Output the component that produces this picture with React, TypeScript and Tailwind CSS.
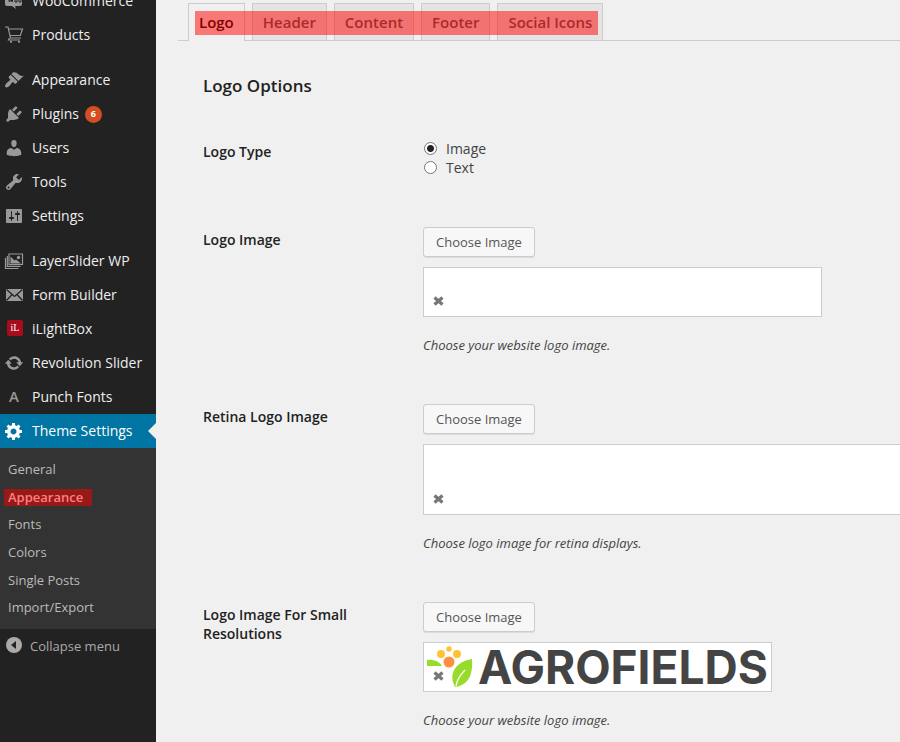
import React from "react";

type IconProps = { children: React.ReactNode };

function Icon({ children }: IconProps) {
  return (
    <svg viewBox="0 0 20 20" className="size-5 shrink-0" fill="currentColor" aria-hidden="true">
      {children}
    </svg>
  );
}

const icons = {
  woo: (
    <Icon>
      <path d="M3 3h13a2 2 0 0 1 2 2v8a2 2 0 0 1-2 2h-5l1 3-4-3H3a2 2 0 0 1-2-2V5a2 2 0 0 1 2-2z" />
      <path d="M4 7l1.500 4L7 8l1 3 1-4M11 7h2v4h-2zM15 7h2v4h-2z" fill="none" stroke="#222" />
    </Icon>
  ),
  cart: (
    <Icon>
      <path
        d="M1 2h3l2.500 11H17M4.800 4H18.500l-2.200 6.500H6M5.500 13l-1 2H16"
        fill="none"
        stroke="currentColor"
        strokeWidth="1.200"
      />
      <circle cx="7" cy="16.800" r="1.100" />
      <circle cx="15" cy="16.800" r="1.100" />
    </Icon>
  ),
  appearance: (
    <Icon>
      <path d="M14.48 11.060L7.410 3.990l1.500-1.500c.5-.56 2.300-.47 3.510.32 1.210.8 1.430 1.280 2.910 2.100 1.180.64 2.450 1.260 4.450.85zm-.71.71L6.700 4.700 4.930 6.470c-.39.39-.39 1.020 0 1.410l1.060 1.060c.39.39.39 1.030 0 1.420-.6.6-1.430 1.110-2.210 1.690-.35.26-.7.53-1.010.84C1.430 14.230.4 16.080 1.400 17.070c.99 1 2.840-.03 4.180-1.360.31-.31.58-.66.85-1.020.57-.78 1.080-1.610 1.690-2.210.39-.39 1.020-.39 1.410 0l1.060 1.060c.39.39 1.020.39 1.410 0z" />
    </Icon>
  ),
  plugins: (
    <Icon>
      <path d="M13.110 4.360L9.870 7.600 8 5.730l3.240-3.240c.35-.34 1.050-.2 1.560.32.52.51.66 1.210.31 1.550zm-8 1.770l.91-1.120 9.010 9.010-1.190.84c-.71.71-2.630 1.160-3.820 1.160H6.140L4.900 17.260c-.59.59-1.540.59-2.120 0-.59-.58-.59-1.530 0-2.120l1.240-1.240v-3.880c0-1.130.4-3.190 1.090-3.890zm7.260 3.970l3.240-3.240c.34-.35 1.040-.21 1.550.31.52.51.66 1.210.31 1.550l-3.240 3.250z" />
    </Icon>
  ),
  users: (
    <Icon>
      <path d="M10 9.250c-2.270 0-2.730-3.440-2.730-3.440C7 4.020 7.820 2 9.970 2c2.160 0 2.980 2.020 2.710 3.810 0 0-.41 3.440-2.680 3.440zm0 2.570L12.720 10c2.390 0 4.520 2.330 4.520 4.530v2.490s-3.650 1.130-7.240 1.130c-3.650 0-7.240-1.130-7.240-1.130v-2.490c0-2.250 1.940-4.480 4.470-4.480z" />
    </Icon>
  ),
  tools: (
    <Icon>
      <path d="M16.680 9.770c-1.340 1.340-3.300 1.670-4.950.99l-5.410 6.520c-.99.99-2.590.99-3.580 0s-.99-2.590 0-3.570l6.520-5.420c-.68-1.650-.35-3.610.99-4.950 1.280-1.280 3.120-1.620 4.720-1.060l-2.890 2.890 2.820 2.820 2.860-2.870c.53 1.580.18 3.390-1.080 4.650zM3.810 16.210c.4.390 1.040.39 1.430 0 .4-.4.4-1.040 0-1.430-.39-.4-1.030-.4-1.430 0-.39.390-.39 1.030 0 1.430z" />
    </Icon>
  ),
  settings: (
    <Icon>
      <path d="M18 16V4c0-.550-.45-1-1-1H3c-.550 0-1 .450-1 1v12c0 .550.450 1 1 1h14c.550 0 1-.450 1-1zM8 11h1c.550 0 1 .450 1 1s-.45 1-1 1H8v1.500c0 .280-.220.500-.5.500s-.5-.220-.5-.500V13H6c-.550 0-1-.450-1-1s.450-1 1-1h1V5.500c0-.280.220-.500.500-.500s.500.220.500.500V11zm5-2h-1c-.550 0-1-.450-1-1s.450-1 1-1h1V5.500c0-.280.220-.500.500-.500s.500.220.500.500V7h1c.550 0 1 .450 1 1s-.45 1-1 1h-1v5.500c0 .280-.220.500-.5.500s-.5-.220-.5-.500V9z" />
    </Icon>
  ),
  layers: (
    <Icon>
      <g fill="none" stroke="currentColor" strokeWidth="1.200">
        <path d="M5 3h13.500v10.500H5zM3.300 5v10.300H16.500M1.500 7v10.500H14.500" />
      </g>
      <path d="M6.500 12.500V5.500l4 4 1.500-1 5 4z" />
      <circle cx="14.500" cy="6.500" r="1.700" />
    </Icon>
  ),
  mail: (
    <Icon>
      <path d="M2 4h17v12H2z" />
      <path d="M2.500 4.500L10.500 11.500 18.500 4.500M2.500 15.500l5.600-6M18.500 15.500l-5.600-6" fill="none" stroke="#222" strokeWidth="1.300" />
    </Icon>
  ),
  update: (
    <Icon>
      <path d="M10.200 3.280c3.530 0 6.430 2.610 6.920 6h2.080l-3.500 4-3.500-4h2.320c-.45-1.970-2.210-3.450-4.320-3.450-1.450 0-2.730.71-3.540 1.780L4.950 5.660C6.230 4.200 8.110 3.280 10.200 3.280zm-.4 13.440c-3.520 0-6.430-2.610-6.920-6H.8l3.500-4c1.170 1.330 2.330 2.670 3.500 4H5.480c.45 1.970 2.210 3.450 4.320 3.450 1.450 0 2.730-.71 3.540-1.780l1.710 1.950c-1.280 1.460-3.150 2.380-5.250 2.380z" />
    </Icon>
  ),
  gear: (
    <Icon>
      <path d="M18 12h-2.180c-.17.700-.44 1.350-.81 1.930l1.540 1.540-2.100 2.100-1.540-1.540c-.58.360-1.230.630-1.910.790V19H8v-2.180c-.68-.16-1.330-.43-1.910-.79l-1.540 1.540-2.120-2.120 1.540-1.540c-.36-.58-.63-1.230-.79-1.910H1V9.030h2.170c.16-.7.440-1.350.8-1.940L2.430 5.550l2.100-2.100 1.540 1.540c.58-.37 1.240-.64 1.930-.81V2h3v2.180c.68.160 1.330.43 1.910.79l1.540-1.540 2.120 2.120-1.540 1.540c.36.590.64 1.240.8 1.940H18V12zm-8.500 1.500c1.660 0 3-1.340 3-3s-1.340-3-3-3-3 1.340-3 3 1.340 3 3 3z" />
    </Icon>
  ),
};

type MenuItem = { label: string; icon: React.ReactNode; gap?: boolean; badge?: number; current?: boolean };

const menu: MenuItem[] = [
  { label: "WooCommerce", icon: icons.woo },
  { label: "Products", icon: icons.cart },
  { label: "Appearance", icon: icons.appearance, gap: true },
  { label: "Plugins", icon: icons.plugins, badge: 6 },
  { label: "Users", icon: icons.users },
  { label: "Tools", icon: icons.tools },
  { label: "Settings", icon: icons.settings },
  { label: "LayerSlider WP", icon: icons.layers, gap: true },
  { label: "Form Builder", icon: icons.mail },
  {
    label: "iLightBox",
    icon: (
      <span className="mr-px ml-[3px] mb-0.5 flex size-4 items-center justify-center rounded-xs bg-[#a80c1c] font-['Liberation_Serif',serif] text-[10px] leading-4 text-white">
        iL
      </span>
    ),
  },
  { label: "Revolution Slider", icon: icons.update },
  {
    label: "Punch Fonts",
    icon: <span className="w-5 pb-0.5 text-center font-['Open_Sans',sans-serif] text-[15px] font-semibold">A</span>,
  },
  { label: "Theme Settings", icon: icons.gear, current: true },
];

const submenu = ["General", "Appearance", "Fonts", "Colors", "Single Posts", "Import/Export"];

function Sidebar() {
  return (
    <nav className="-mt-4 w-39 shrink-0 bg-[#222]" aria-label="Admin menu">
      <ul>
        {menu.map((item) => (
          <li key={item.label} className={item.gap ? "mt-[11px]" : ""}>
            <a
              href="#"
              className={
                "relative flex h-[34px] items-center gap-2 pl-1 text-[14px] whitespace-nowrap " +
                (item.current ? "bg-[#0074a2] text-white" : "text-[#999]")
              }
            >
              {item.icon}
              <span className={"pb-0.5 " + (item.current ? "text-white" : "text-[#eee]")}>{item.label}</span>
              {item.badge && (
                <span className="-ml-0.5 flex size-[17px] items-center justify-center rounded-full bg-[#d54e21] text-[9px] font-bold text-white">
                  {item.badge}
                </span>
              )}
              {item.current && (
                <span className="absolute right-0 top-[9px] border-y-8 border-r-8 border-y-transparent border-r-[#f0f0f0]" />
              )}
            </a>
          </li>
        ))}
      </ul>
      <ul className="flex h-[181px] flex-col bg-[#333] pt-2 pb-[7px] text-[13px] text-[#bbb]">
        {submenu.map((name) => (
          <li key={name} className="flex flex-1 items-center pl-1">
            {name === "Appearance" ? (
              <a href="#" className="bg-[#991919] pr-[9px] pl-1 text-[13px] leading-[17px] font-semibold text-[#ff8080]">
                {name}
              </a>
            ) : (
              <a href="#" className="px-1">
                {name}
              </a>
            )}
          </li>
        ))}
      </ul>
      <button type="button" className="flex h-[34px] items-center gap-1.5 pl-1 text-[13px] text-[#aaa]">
        <svg viewBox="0 0 20 20" className="size-5" aria-hidden="true">
          <circle cx="10" cy="9" r="8" fill="#aaa" />
          <path d="M12 5v8L7 9z" fill="#222" />
        </svg>
        <span className="pt-0.5">Collapse menu</span>
      </button>
    </nav>
  );
}

const tabs = ["Logo", "Header", "Content", "Footer", "Social Icons"];

function Tabs() {
  return (
    <div className="relative flex gap-[7px] border-b border-[#ccc] pl-2.5">
      {tabs.map((tab, i) => (
        <a
          key={tab}
          href="#"
          className={
            "border border-b-0 border-[#ccc] px-2.5 py-1.5 text-[15px] leading-6 font-semibold whitespace-nowrap " +
            (i === 0 ? "-mb-px bg-[#f0f0f0] pb-[7px] text-black" : "bg-[#e4e4e4] text-[#555]")
          }
        >
          {tab}
        </a>
      ))}
      <span className="pointer-events-none absolute top-2 left-[17px] h-6 w-[403px] bg-[#ff0000]/50" />
    </div>
  );
}

function Row({ label, children }: { label: string; children: React.ReactNode }) {
  return (
    <div className="mb-[50px] grid grid-cols-[180px_minmax(0,1fr)] gap-x-10">
      <h3 className="pt-[3px] text-[14px] leading-[19px] font-semibold text-[#222]">{label}</h3>
      <div>{children}</div>
    </div>
  );
}

function ImageField({ box, note, children }: { box: string; note: string; children?: React.ReactNode }) {
  return (
    <>
      <button
        type="button"
        className="block h-[30px] rounded-[3px] border border-[#ccc] bg-[#f7f7f7] px-3 pt-0.5 text-[13px] text-[#555] shadow-[0_1px_0_rgba(0,0,0,0.08)]"
      >
        Choose Image
      </button>
      <div className={"relative mt-2.5 border border-[#ccc] bg-white " + box}>
        {children}
        <button type="button" aria-label="Remove image" className="absolute bottom-2.5 left-[9px] text-[#777]">
          <svg viewBox="0 0 11 10" className="h-2.5 w-[11px]" aria-hidden="true">
            <path d="M1.500 1.500l8 7M9.500 1.500l-8 7" stroke="currentColor" strokeWidth="3.200" />
          </svg>
        </button>
      </div>
      <p className="mt-[19px] text-[13px] leading-[18px] text-[#444] italic">{note}</p>
    </>
  );
}

function Logo() {
  return (
    <div className="flex h-full items-center pl-[3px]">
      <svg viewBox="0 0 46 42" className="mr-[5px] h-[42px] w-[46px] shrink-0" aria-hidden="true">
        <path d="M0 14c6-1 12 1 15 6H0z" fill="#97dc2b" />
        <path d="M45 13c1 13-2 26-17 28-7-13 0-25 17-28z" fill="#97dc2b" />
        <path d="M29 40c1-6 4-11 9-16" fill="none" stroke="#fff" strokeWidth="1.300" />
        <circle cx="22" cy="16" r="5.500" fill="#ff8f3c" />
        <circle cx="14" cy="8" r="4" fill="#ffc233" />
        <circle cx="30" cy="8" r="4" fill="#ffc233" />
        <circle cx="22" cy="3" r="2.700" fill="#ffc233" />
      </svg>
      <span className="font-['Inter',sans-serif] text-[46px] leading-[48px] font-bold text-[#444]">AGROFIELDS</span>
    </div>
  );
}

function Radio({ label, checked }: { label: string; checked?: boolean }) {
  return (
    <label className="flex h-[19px] items-center gap-2 pl-px text-[14px] text-[#444]">
      <input
        type="radio"
        name="logo-type"
        defaultChecked={checked}
        className="mr-px size-[13px] appearance-none rounded-full border border-[#777] bg-white checked:bg-[radial-gradient(circle,#222_3px,#fff_4px)]"
      />
      {label}
    </label>
  );
}

export default function App() {
  return (
    <div className="flex h-screen overflow-hidden bg-[#f0f0f0] font-['Open_Sans',sans-serif]">
      <Sidebar />
      <main className="min-w-0 flex-1 pt-[3px] pl-[22px]">
        <Tabs />
        <div className="pt-[35px] pl-[25px]">
          <h2 className="mb-[43px] text-[17px] leading-5 font-semibold text-[#222]">Logo Options</h2>
          <Row label="Logo Type">
            <Radio label="Image" checked />
            <Radio label="Text" />
          </Row>
          <Row label="Logo Image">
            <ImageField box="h-[50px] w-[399px]" note="Choose your website logo image." />
          </Row>
          <Row label="Retina Logo Image">
            <ImageField box="h-[71px] w-[799px]" note="Choose logo image for retina displays." />
          </Row>
          <Row label="Logo Image For Small Resolutions">
            <ImageField box="h-[50px] w-[349px]" note="Choose your website logo image.">
              <Logo />
            </ImageField>
          </Row>
        </div>
      </main>
    </div>
  );
}
